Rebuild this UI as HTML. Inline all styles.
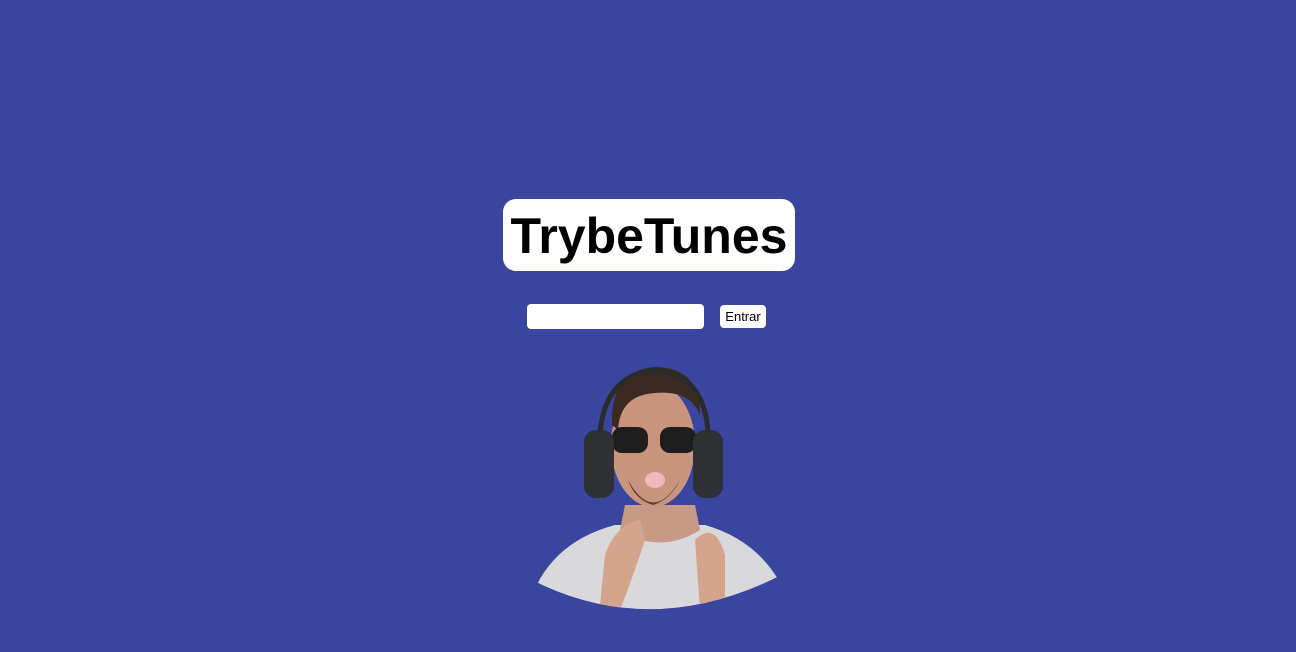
<!DOCTYPE html>
<html><head><style>
html,body{margin:0;padding:0;width:1296px;height:652px;background:#3a45a0;overflow:hidden;font-family:"Liberation Sans",sans-serif}
.logo{position:absolute;left:503px;top:199px;width:292px;height:72px;background:#fff;border-radius:13px;text-align:center;font-weight:bold;font-size:50px;line-height:74px;color:#000;letter-spacing:0px}
.inp{position:absolute;left:527px;top:304px;width:177px;height:25px;background:#fff;border-radius:4px}
.btn{position:absolute;left:720px;top:305px;width:46px;height:23px;background:#fff;border-radius:4px;font-size:13px;line-height:23px;text-align:center;color:#000}
svg{position:absolute;left:520px;top:355px}
</style></head><body>
<div class="logo">TrybeTunes</div>
<div class="inp"></div>
<div class="btn">Entrar</div>
<svg width="280" height="265" viewBox="0 0 280 265">
<defs><clipPath id="c"><path d="M0 0H280V210 Q140 290 12 225 Z"/></clipPath></defs>
<g clip-path="url(#c)">
<path d="M5 265 Q20 190 95 170 L185 170 Q255 190 275 265Z" fill="#d9d9dc"/>
<path d="M100 175 Q140 200 180 175 L175 150 L105 150Z" fill="#c89a85"/>
<ellipse cx="133" cy="90" rx="42" ry="62" fill="#c9957f"/>
<path d="M92 70 Q90 15 135 12 Q180 12 180 60 Q170 35 135 38 Q100 40 98 75Z" fill="#3a2a22"/>
<path d="M108 125 Q133 170 160 125 Q150 145 133 150 Q115 145 108 125Z" fill="#5a3e30"/>
<rect x="92" y="72" width="36" height="26" rx="10" fill="#1e1e1e"/>
<rect x="140" y="72" width="36" height="26" rx="10" fill="#1e1e1e"/>
<rect x="64" y="75" width="30" height="68" rx="12" fill="#2f3033"/>
<rect x="173" y="75" width="30" height="68" rx="12" fill="#2f3033"/>
<path d="M80 78 Q85 20 135 15 Q185 20 188 78" stroke="#2b2b2b" stroke-width="5" fill="none"/>
<ellipse cx="135" cy="125" rx="10" ry="8" fill="#f2b8bd"/>
<path d="M85 200 Q95 170 120 165 L125 185 Q110 230 100 255 L80 250Z" fill="#d4a58c"/>
<path d="M175 185 Q195 165 205 200 L205 250 L180 255Z" fill="#d4a58c"/>
</g>
</svg>
</body></html>
